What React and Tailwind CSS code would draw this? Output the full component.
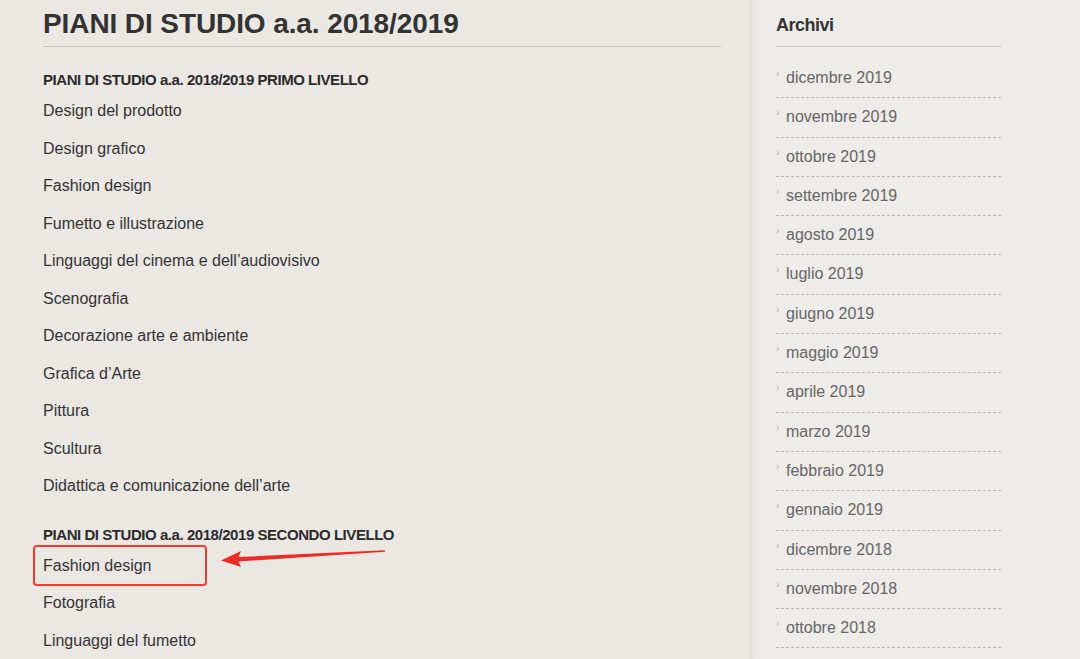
import React from "react";

const primo = [
  "Design del prodotto",
  "Design grafico",
  "Fashion design",
  "Fumetto e illustrazione",
  "Linguaggi del cinema e dell’audiovisivo",
  "Scenografia",
  "Decorazione arte e ambiente",
  "Grafica d’Arte",
  "Pittura",
  "Scultura",
  "Didattica e comunicazione dell’arte",
];

const secondo = ["Fashion design", "Fotografia", "Linguaggi del fumetto"];

const archivi = [
  "dicembre 2019",
  "novembre 2019",
  "ottobre 2019",
  "settembre 2019",
  "agosto 2019",
  "luglio 2019",
  "giugno 2019",
  "maggio 2019",
  "aprile 2019",
  "marzo 2019",
  "febbraio 2019",
  "gennaio 2019",
  "dicembre 2018",
  "novembre 2018",
  "ottobre 2018",
];

export default function App() {
  return (
    <div
      className="w-[1080px] h-[659px] overflow-hidden flex bg-[#ebe8e4]"
      style={{ fontFamily: '"Liberation Sans", Arial, sans-serif' }}
    >
      <div className="w-[750px] shrink-0 pl-[43px] pr-[29px]">
        <h1 className="text-[28px] leading-[34px] font-bold text-[#333] pt-[7px] pb-[5px] border-b border-[#c8c5c1] tracking-[-0.1px]">
          PIANI DI STUDIO a.a. 2018/2019
        </h1>
        <h2 className="mt-[24px] text-[15px] leading-[18px] font-bold text-[#2b2b2b] tracking-[-0.45px]">
          PIANI DI STUDIO a.a. 2018/2019 PRIMO LIVELLO
        </h2>
        <ul className="mt-[10px]">
          {primo.map((t) => (
            <li key={t} className="h-[37.5px] text-[16px] leading-[22px] text-[#333] pt-[1px]">
              {t}
            </li>
          ))}
        </ul>
        <h2 className="mt-[14px] text-[15px] leading-[18px] font-bold text-[#2b2b2b] tracking-[-0.45px]">
          PIANI DI STUDIO a.a. 2018/2019 SECONDO LIVELLO
        </h2>
        <ul className="mt-[10px]">
          {secondo.map((t, i) => (
            <li key={t} className="h-[37.5px] text-[16px] leading-[22px] text-[#333] pt-[1px] relative">
              {t}
              {i === 0 && (
                <>
                  <span className="absolute left-[-10px] top-[-9px] w-[174px] h-[41px] border-2 border-[#f23b30] rounded-[4px]" />
                  <svg
                    className="absolute left-[176px] top-[-6px]"
                    width="170"
                    height="20"
                    viewBox="0 0 170 20"
                  >
                    <path
                      d="M2 12.5 L22 3 L19.5 9 L166 2.2 L166 3.8 L19.5 13.5 L22 19 Z"
                      fill="#ee2a22"
                    />
                  </svg>
                </>
              )}
            </li>
          ))}
        </ul>
      </div>
      <div className="flex-1 relative bg-[#eeece9] border-l border-[#e2dfdb] shadow-[inset_6px_0_6px_-4px_rgba(0,0,0,0.06)] pl-[25px]">
        <div className="w-[225px]">
          <h3 className="text-[18px] leading-[22px] font-bold text-[#333] pt-[14px] pb-[10px] border-b border-[#c8c5c1] tracking-[-0.5px]">
            Archivi
          </h3>
          <ul className="mt-[12px]">
            {archivi.map((a) => (
              <li
                key={a}
                className="h-[39.3px] border-b border-dashed border-[#b9b6b2] flex items-start pt-[9px]"
              >
                <span className="text-[#b3b0ac] text-[10px] leading-[14px] w-[10px] -mt-[1px]">›</span>
                <span className="text-[16px] leading-[20px] text-[#666]">{a}</span>
              </li>
            ))}
          </ul>
        </div>
      </div>
    </div>
  );
}
